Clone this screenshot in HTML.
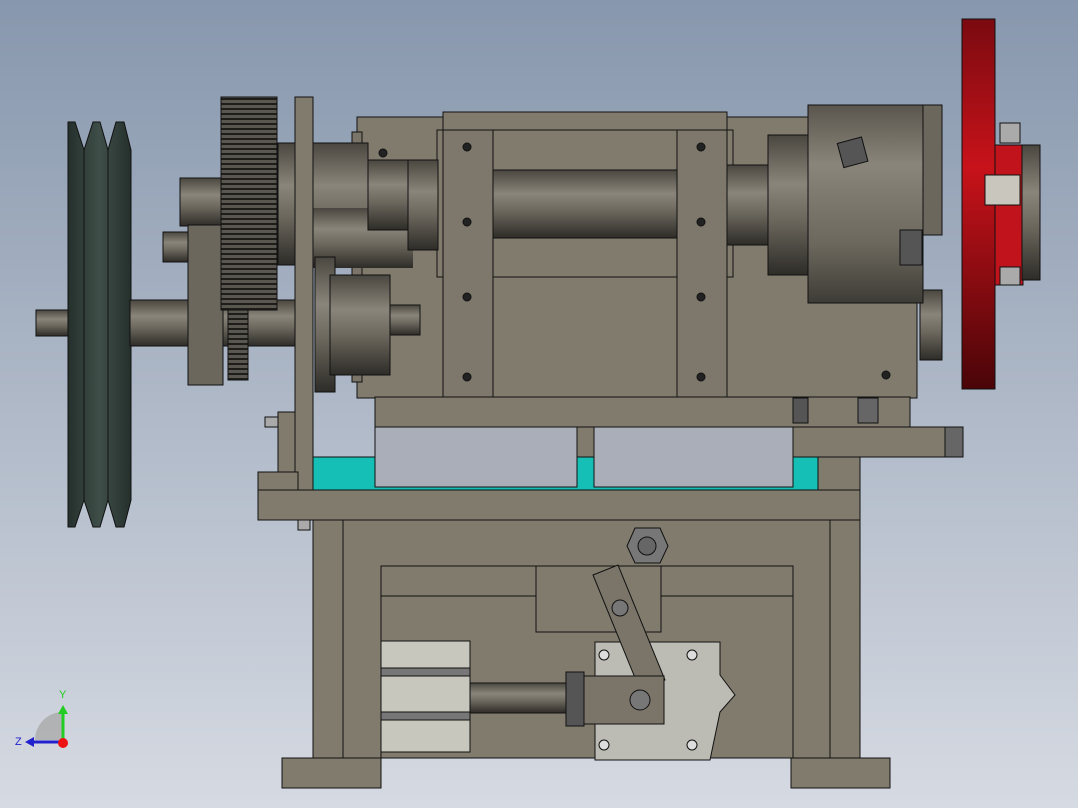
<!DOCTYPE html>
<html><head><meta charset="utf-8"><style>
html,body{margin:0;padding:0;width:1078px;height:808px;overflow:hidden}
svg{display:block}
text{font-family:"Liberation Sans",sans-serif}
</style></head><body>
<svg width="1078" height="808" viewBox="0 0 1078 808" xmlns="http://www.w3.org/2000/svg">
<defs>
<linearGradient id="bg" x1="0" y1="0" x2="0" y2="1"><stop offset="0" stop-color="#8797ad"/><stop offset="1" stop-color="#d6dae2"/></linearGradient>
<linearGradient id="cyl" x1="0" y1="0" x2="0" y2="1"><stop offset="0" stop-color="#4a4740"/><stop offset="0.35" stop-color="#8a857a"/><stop offset="0.6" stop-color="#6c685e"/><stop offset="1" stop-color="#2e2c28"/></linearGradient>
<linearGradient id="chk" x1="0" y1="0" x2="0" y2="1"><stop offset="0" stop-color="#5a564e"/><stop offset="0.3" stop-color="#8a857a"/><stop offset="0.7" stop-color="#6c685e"/><stop offset="1" stop-color="#3e3c36"/></linearGradient>
<linearGradient id="red" x1="0" y1="0" x2="0" y2="1"><stop offset="0" stop-color="#7a0a10"/><stop offset="0.4" stop-color="#c8121a"/><stop offset="1" stop-color="#4a0508"/></linearGradient>
<linearGradient id="grn" x1="0" y1="0" x2="1" y2="0"><stop offset="0" stop-color="#25302c"/><stop offset="0.5" stop-color="#3f4e48"/><stop offset="1" stop-color="#25302c"/></linearGradient>
<pattern id="teeth" width="4" height="5" patternUnits="userSpaceOnUse"><rect width="4" height="5" fill="#5a5750"/><rect y="3" width="4" height="2" fill="#1e1d1a"/></pattern>
</defs>
<rect width="1078" height="808" fill="url(#bg)"/>
<g stroke="#111" stroke-width="1">
<rect x="36" y="310" width="100" height="26" fill="url(#cyl)"/>
<path d="M68 122 L75 122 L84 150 L93 122 L100 122 L108 150 L116 122 L124 122 L131 150 L131 500 L124 527 L116 527 L108 500 L100 527 L93 527 L84 500 L75 527 L68 527 Z" fill="url(#grn)"/>
<line x1="84" y1="150" x2="84" y2="500"/><line x1="108" y1="150" x2="108" y2="500"/>
<rect x="130" y="300" width="170" height="46" fill="url(#cyl)"/>
<rect x="180" y="178" width="110" height="48" fill="url(#cyl)"/>
<rect x="163" y="232" width="60" height="30" fill="url(#cyl)"/>
<rect x="188" y="225" width="35" height="160" fill="#6b675d"/>
<rect x="228" y="300" width="20" height="80" fill="url(#teeth)"/>
<rect x="357" y="117" width="560" height="281" fill="#807b6d"/>
<rect x="352" y="132" width="10" height="250" fill="#7a7568"/>
<rect x="443" y="112" width="284" height="20" fill="#807b6d"/>
<rect x="437" y="130" width="296" height="147" fill="#807b6d"/>
<rect x="443" y="130" width="50" height="268" fill="#7d786b"/>
<rect x="677" y="130" width="50" height="268" fill="#7d786b"/>
<rect x="493" y="170" width="184" height="68" fill="url(#cyl)"/>
<rect x="727" y="165" width="60" height="80" fill="url(#cyl)"/>
<rect x="375" y="397" width="535" height="30" fill="#807b6d"/>
<rect x="278" y="143" width="90" height="122" fill="url(#cyl)"/>
<rect x="313" y="208" width="100" height="60" fill="url(#cyl)" stroke="none"/>
<rect x="368" y="160" width="40" height="70" fill="url(#cyl)"/>
<rect x="408" y="160" width="30" height="90" fill="url(#cyl)"/>
<rect x="315" y="257" width="20" height="135" fill="url(#cyl)"/>
<rect x="330" y="275" width="60" height="100" fill="url(#cyl)"/>
<rect x="390" y="305" width="30" height="30" fill="url(#cyl)"/>
<rect x="221" y="97" width="56" height="213" fill="url(#teeth)"/>
<rect x="295" y="97" width="18" height="398" fill="#807b6d"/>
<rect x="265" y="417" width="15" height="10" fill="#aaa"/>
<rect x="278" y="412" width="17" height="78" fill="#807b6d"/>
<rect x="258" y="472" width="40" height="20" fill="#807b6d"/>
<g fill="#222">
<circle cx="467" cy="147" r="4"/><circle cx="467" cy="222" r="4"/><circle cx="467" cy="297" r="4"/><circle cx="467" cy="377" r="4"/>
<circle cx="701" cy="147" r="4"/><circle cx="701" cy="222" r="4"/><circle cx="701" cy="297" r="4"/><circle cx="701" cy="377" r="4"/>
<circle cx="383" cy="153" r="4"/><circle cx="886" cy="375" r="4"/>
</g>
<rect x="768" y="135" width="45" height="140" fill="url(#cyl)"/>
<rect x="920" y="290" width="22" height="70" fill="url(#cyl)"/>
<rect x="920" y="105" width="22" height="130" fill="#6b675d"/>
<rect x="808" y="105" width="115" height="198" fill="url(#chk)"/>
<rect x="840" y="140" width="25" height="25" fill="#555" transform="rotate(-15 852 152)"/>
<rect x="900" y="230" width="22" height="35" fill="#555"/>
<rect x="962" y="19" width="33" height="370" fill="url(#red)"/>
<rect x="995" y="145" width="28" height="140" fill="#c0131b"/>
<rect x="1022" y="145" width="18" height="135" fill="url(#cyl)"/>
<rect x="985" y="175" width="35" height="30" fill="#c9c6bd"/>
<rect x="1000" y="123" width="20" height="20" fill="#aaa"/>
<rect x="1000" y="267" width="20" height="18" fill="#aaa"/>
<rect x="313" y="457" width="505" height="33" fill="#15bfb6"/>
<rect x="375" y="427" width="202" height="60" fill="#a9aeb8"/>
<rect x="594" y="427" width="199" height="60" fill="#a9aeb8"/>
<rect x="577" y="427" width="17" height="30" fill="#807b6d"/>
<rect x="793" y="427" width="160" height="30" fill="#807b6d"/>
<rect x="818" y="457" width="42" height="33" fill="#807b6d"/>
<rect x="945" y="427" width="18" height="30" fill="#666"/>
<rect x="858" y="398" width="20" height="25" fill="#666"/>
<rect x="793" y="398" width="15" height="25" fill="#555"/>
<rect x="258" y="490" width="602" height="30" fill="#807b6d"/>
<rect x="298" y="520" width="12" height="10" fill="#aaa"/>
<rect x="313" y="520" width="547" height="238" fill="#807b6d"/>
<line x1="343" y1="520" x2="343" y2="758"/><line x1="830" y1="520" x2="830" y2="758"/>
<rect x="381" y="566" width="412" height="192" fill="#807b6d"/>
<line x1="381" y1="596" x2="793" y2="596"/>
<rect x="536" y="566" width="125" height="66" fill="#807b6d"/>
<polygon points="635,528 660,528 668,546 660,563 635,563 627,546" fill="#777"/>
<circle cx="647" cy="546" r="9" fill="#666"/>
<path d="M595 642 L720 642 L720 675 L735 695 L720 712 L710 760 L595 760 Z" fill="#bdbcb4"/>
<circle cx="604" cy="655" r="5" fill="#ddd"/><circle cx="604" cy="745" r="5" fill="#ddd"/><circle cx="692" cy="655" r="5" fill="#ddd"/><circle cx="692" cy="745" r="5" fill="#ddd"/>
<polygon points="593,575 618,565 665,680 640,690" fill="#7a7568"/>
<circle cx="620" cy="608" r="8" fill="#777"/>
<rect x="381" y="641" width="89" height="111" fill="#c8c7bd"/>
<rect x="381" y="668" width="89" height="8" fill="#777"/>
<rect x="381" y="712" width="89" height="8" fill="#777"/>
<rect x="470" y="683" width="100" height="30" fill="url(#cyl)"/>
<rect x="566" y="672" width="18" height="54" fill="#555"/>
<rect x="584" y="676" width="80" height="48" fill="#7a7568"/>
<circle cx="640" cy="700" r="10" fill="#777"/>
<rect x="282" y="758" width="99" height="30" fill="#807b6d"/>
<rect x="791" y="758" width="99" height="30" fill="#807b6d"/>
</g>
<path d="M35 740 A28 28 0 0 1 63 712 L63 740 Z" fill="#aaa" opacity="0.8"/>
<line x1="63" y1="742" x2="63" y2="712" stroke="#2c2" stroke-width="3"/>
<polygon points="58,714 68,714 63,705" fill="#2c2"/>
<line x1="63" y1="742" x2="33" y2="742" stroke="#22c" stroke-width="3"/>
<polygon points="34,737 34,747 25,742" fill="#22c"/>
<circle cx="63" cy="743" r="5" fill="#e11"/>
<text x="59" y="698" font-size="11" fill="#2c2">Y</text>
<text x="15" y="745" font-size="11" fill="#22c">Z</text>
</svg>
</body></html>
